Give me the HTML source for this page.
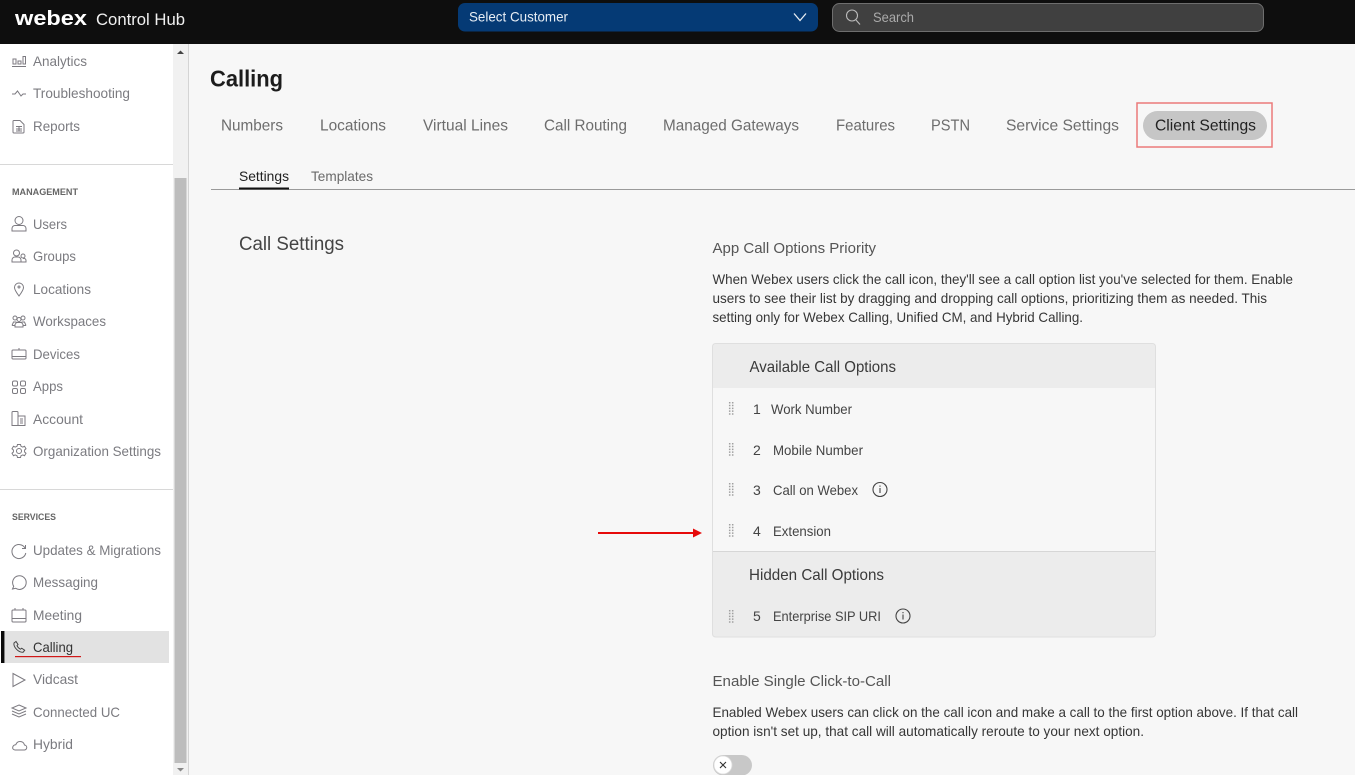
<!DOCTYPE html>
<html><head><meta charset="utf-8"><title>Webex Control Hub</title>
<style>
html,body{margin:0;padding:0;background:#f7f7f7;overflow:hidden}
svg{display:block}
text{font-family:"Liberation Sans",sans-serif;white-space:pre}
.n{font-size:14px;fill:#7b7b80}
.s{font-size:9.500px;font-weight:bold;fill:#666}
.t{font-size:16px;fill:#6d6d6d}
.b{font-size:14px;fill:#363636}
.h{font-size:16px;fill:#3a3a3a}
.r{font-size:14px;fill:#444}
.i{fill:none;stroke:#7c7a80;stroke-width:1}
</style></head><body>
<svg width="1356" height="777" viewBox="0 0 1356 777" xmlns="http://www.w3.org/2000/svg">
<rect width="1356" height="777" fill="#f7f7f7"/>
<!-- sidebar -->
<rect x="0" y="44" width="173" height="733" fill="#fff"/>
<rect x="173" y="44" width="15" height="733" fill="#f1f1f1"/>
<rect x="188" y="44" width="1" height="733" fill="#d4d4d4"/>
<rect x="174.500" y="178" width="12" height="585" fill="#bdbdbd"/>
<path d="M177 54l3.500-3.500 3.500 3.500z" fill="#444"/>
<path d="M177 768l3.500 3.500 3.500-3.500z" fill="#888"/>
<rect x="0" y="164" width="173" height="1" fill="#d8d8d8"/>
<rect x="0" y="489" width="173" height="1" fill="#d8d8d8"/>
<rect x="5" y="631" width="164" height="32" fill="#e2e2e2"/>
<rect x="1" y="631" width="3.500" height="32" fill="#0a0a0a"/>

<g lengthAdjust="spacingAndGlyphs">
<text class="n" lengthAdjust="spacingAndGlyphs" x="33" y="66" textLength="54">Analytics</text>
<text class="n" lengthAdjust="spacingAndGlyphs" x="33" y="98" textLength="97">Troubleshooting</text>
<text class="n" lengthAdjust="spacingAndGlyphs" x="33" y="131" textLength="47">Reports</text>
<text class="s" lengthAdjust="spacingAndGlyphs" x="12" y="195" textLength="66">MANAGEMENT</text>
<text class="n" lengthAdjust="spacingAndGlyphs" x="33" y="229" textLength="34">Users</text>
<text class="n" lengthAdjust="spacingAndGlyphs" x="33" y="261" textLength="43">Groups</text>
<text class="n" lengthAdjust="spacingAndGlyphs" x="33" y="294" textLength="58">Locations</text>
<text class="n" lengthAdjust="spacingAndGlyphs" x="33" y="326" textLength="73">Workspaces</text>
<text class="n" lengthAdjust="spacingAndGlyphs" x="33" y="359" textLength="47">Devices</text>
<text class="n" lengthAdjust="spacingAndGlyphs" x="33" y="391" textLength="30">Apps</text>
<text class="n" lengthAdjust="spacingAndGlyphs" x="33" y="424" textLength="50">Account</text>
<text class="n" lengthAdjust="spacingAndGlyphs" x="33" y="456" textLength="128">Organization Settings</text>
<text class="s" lengthAdjust="spacingAndGlyphs" x="12" y="520" textLength="44">SERVICES</text>
<text class="n" lengthAdjust="spacingAndGlyphs" x="33" y="555" textLength="128">Updates &amp; Migrations</text>
<text class="n" lengthAdjust="spacingAndGlyphs" x="33" y="587" textLength="65">Messaging</text>
<text class="n" lengthAdjust="spacingAndGlyphs" x="33" y="620" textLength="49">Meeting</text>
<text class="n" lengthAdjust="spacingAndGlyphs" x="33" y="652" textLength="40" style="fill:#333">Calling</text>
<text class="n" lengthAdjust="spacingAndGlyphs" x="33" y="684" textLength="45">Vidcast</text>
<text class="n" lengthAdjust="spacingAndGlyphs" x="33" y="717" textLength="87">Connected UC</text>
<text class="n" lengthAdjust="spacingAndGlyphs" x="33" y="749" textLength="40">Hybrid</text>
</g>
<rect x="15" y="656" width="66" height="1.200" fill="#d01818"/>

<!-- sidebar icons -->
<g class="i">
<path d="M12 66.500h14M13 59h3v5h-3zM18 61h3v3h-3zM23 56.500h2.500v7.500H23z"/>
<path d="M12 94h3l2.500-3 3.500 5 2-2h3"/>
<path d="M14 120.500h6l4 4v7.500a1 1 0 0 1-1 1h-9a1 1 0 0 1-1-1v-11a1 1 0 0 1 1-.500zM16 126.500h6M16 129h6M16 131h6M19 126.500v5"/>
<circle cx="19" cy="220.500" r="4"/><path d="M12 231v-2.500a3 3 0 0 1 3-3h8a3 3 0 0 1 3 3V231z"/>
<circle cx="16.500" cy="253" r="3"/><path d="M12 262v-2a3 3 0 0 1 3-3h3a3 3 0 0 1 3 3v2zM23 254a2 2 0 1 1 0 4 2 2 0 0 1 0-4zM21 262h5v-1.500a2 2 0 0 0-3-1.800"/>
<path d="M19 296c-3-4-4.500-6.500-4.500-8.500a4.500 4.500 0 0 1 9 0c0 2-1.500 4.500-4.500 8.500z"/><circle cx="19" cy="287" r="1"/>
<circle cx="15" cy="318" r="2"/><circle cx="19" cy="319.500" r="2"/><circle cx="23" cy="318" r="2"/><path d="M12 325.500l1.500-3.500h3M26 325.500l-1.500-3.500h-3M15 327v-2.500l1.500-2h5l1.500 2V327zM12 325.500h3M23 325.500h3"/>
<rect x="12" y="350" width="14" height="9" rx="1"/><path d="M12 356.500h14M19 350v-2"/>
<rect x="12.500" y="381" width="5" height="5" rx="1.500"/><rect x="20.500" y="381" width="5" height="5" rx="1.500"/><rect x="12.500" y="388.500" width="5" height="5" rx="1.500"/><rect x="20.500" y="388.500" width="5" height="5" rx="1.500"/>
<path d="M12 425.500v-13a1 1 0 0 1 1-1h4a1 1 0 0 1 1 1v13zM18 416h7v9.500h-7M20 419h3M20 421h3M20 423h3"/>
<circle cx="19" cy="451" r="2.500"/><path d="M17.500 444.500h3l.5 1.800 1.800.8 1.700-.8 1.500 2.500-1.400 1.200v2l1.400 1.200-1.500 2.500-1.700-.8-1.800.8-.5 1.800h-3l-.5-1.800-1.800-.8-1.700.8-1.500-2.500 1.400-1.200v-2l-1.400-1.200 1.500-2.500 1.700.8 1.800-.8z"/>
<path d="M25.500 545v3.500H22M25 548a7 7 0 1 0 .8 5"/>
<path d="M12.500 589l1.200-2.700a6.800 6.800 0 1 1 2 2l-3.200.7z"/>
<rect x="12" y="610" width="14" height="12" rx="1"/><path d="M12 618.500h14M15 610v-2M23 610v-2"/>
<path d="M14 643l2-1.500 2 3-1 1.200a7 7 0 0 0 3.500 3.500l1.200-1 3 2-1.500 2c-5 .5-10-5.500-9.200-9.200z" stroke="#444"/>
<path d="M13 673.500l12 6.500-12 6.500z"/>
<path d="M19 705l7 3-7 3-7-3zM12 711l7 3 7-3M12 714l7 3 7-3"/>
<path d="M15 750h9a2.500 2.500 0 0 0 .5-5c-.5-2-2-3.500-4.500-3.500-2.200 0-3.500 1.200-4.200 3.200-3.500.2-4.500 4.800-.8 5.300z"/>
</g>

<!-- header -->
<rect width="1356" height="44" fill="#0e0e0e"/>
<text lengthAdjust="spacingAndGlyphs" x="15" y="25" textLength="72" style="font-size:20px;font-weight:bold;fill:#fff">webex</text>
<text lengthAdjust="spacingAndGlyphs" x="96" y="25" textLength="89" style="font-size:17px;fill:#f0f0f0">Control Hub</text>
<rect x="458" y="3" width="360" height="28.500" rx="7" fill="#053a75"/>
<text lengthAdjust="spacingAndGlyphs" x="469" y="21.500" textLength="99" style="font-size:14px;fill:#e8eef5">Select Customer</text>
<path d="M794 13.500l6 7 6-7" fill="none" stroke="#e6ecf3" stroke-width="1.300"/>
<rect x="832.500" y="3.500" width="431" height="28" rx="7" fill="#404040" stroke="#6e6e6e"/>
<circle cx="852" cy="15.500" r="5.500" fill="none" stroke="#bbb" stroke-width="1.100"/>
<path d="M856 20l4 4.500" stroke="#bbb" stroke-width="1.100"/>
<text lengthAdjust="spacingAndGlyphs" x="873" y="22" textLength="41" style="font-size:14px;fill:#aaa">Search</text>

<!-- title & tabs -->
<text lengthAdjust="spacingAndGlyphs" x="210" y="86.500" textLength="73" style="font-size:23px;font-weight:bold;fill:#1c1c1c">Calling</text>
<text class="t" lengthAdjust="spacingAndGlyphs" x="221" y="130.500" textLength="62">Numbers</text>
<text class="t" lengthAdjust="spacingAndGlyphs" x="320" y="130.500" textLength="66">Locations</text>
<text class="t" lengthAdjust="spacingAndGlyphs" x="423" y="130.500" textLength="85">Virtual Lines</text>
<text class="t" lengthAdjust="spacingAndGlyphs" x="544" y="130.500" textLength="83">Call Routing</text>
<text class="t" lengthAdjust="spacingAndGlyphs" x="663" y="130.500" textLength="136">Managed Gateways</text>
<text class="t" lengthAdjust="spacingAndGlyphs" x="836" y="130.500" textLength="59">Features</text>
<text class="t" lengthAdjust="spacingAndGlyphs" x="931" y="130.500" textLength="39">PSTN</text>
<text class="t" lengthAdjust="spacingAndGlyphs" x="1006" y="130.500" textLength="113">Service Settings</text>
<rect x="1143" y="111" width="124" height="29" rx="14.500" fill="#c6c6c6"/>
<text lengthAdjust="spacingAndGlyphs" x="1155" y="130.500" textLength="101" style="font-size:16px;fill:#222">Client Settings</text>
<rect x="1137" y="103" width="135" height="44" fill="none" stroke="#ec7a7a" stroke-width="1.500"/>

<text lengthAdjust="spacingAndGlyphs" x="239" y="181" textLength="50" style="font-size:14px;fill:#222">Settings</text>
<text lengthAdjust="spacingAndGlyphs" x="311" y="181" textLength="62" style="font-size:14px;fill:#6a6a6a">Templates</text>
<rect x="211" y="189" width="1145" height="1" fill="#9a9a9a"/>
<rect x="239" y="187.500" width="50" height="2" fill="#111"/>

<!-- content -->
<text lengthAdjust="spacingAndGlyphs" x="239" y="250" textLength="105" style="font-size:19px;fill:#444">Call Settings</text>
<text lengthAdjust="spacingAndGlyphs" x="712.500" y="253" textLength="163.500" style="font-size:15px;fill:#555">App Call Options Priority</text>
<text class="b" lengthAdjust="spacingAndGlyphs" x="712.500" y="284" textLength="580.500">When Webex users click the call icon, they'll see a call option list you've selected for them. Enable</text>
<text class="b" lengthAdjust="spacingAndGlyphs" x="712.500" y="303" textLength="554.500">users to see their list by dragging and dropping call options, prioritizing them as needed. This</text>
<text class="b" lengthAdjust="spacingAndGlyphs" x="712.500" y="322" textLength="370.500">setting only for Webex Calling, Unified CM, and Hybrid Calling.</text>

<!-- panel -->
<rect x="712.500" y="343.500" width="443" height="293.500" rx="3" fill="#ececec" stroke="#dfdfdf"/>
<rect x="713" y="388" width="442" height="163" fill="#f7f7f7"/>
<rect x="713" y="551" width="442" height="1" fill="#d6d6d6"/>
<text class="h" lengthAdjust="spacingAndGlyphs" x="749.500" y="372" textLength="146.500">Available Call Options</text>
<text class="h" lengthAdjust="spacingAndGlyphs" x="749" y="580" textLength="135">Hidden Call Options</text>

<g fill="none" stroke="#a0a0a0" stroke-width="1.500" stroke-dasharray="1.500 1.300">
<path d="M729.700 402v13M732.700 402v13"/>
<path d="M729.700 443v13M732.700 443v13"/>
<path d="M729.700 483v13M732.700 483v13"/>
<path d="M729.700 524v13M732.700 524v13"/>
<path d="M729.700 610v13M732.700 610v13"/>
</g>

<text class="r" x="753" y="414">1</text><text class="r" lengthAdjust="spacingAndGlyphs" x="771" y="414" textLength="81">Work Number</text>
<text class="r" x="753" y="455">2</text><text class="r" lengthAdjust="spacingAndGlyphs" x="773" y="455" textLength="90">Mobile Number</text>
<text class="r" x="753" y="495">3</text><text class="r" lengthAdjust="spacingAndGlyphs" x="773" y="495" textLength="85">Call on Webex</text>
<text class="r" x="753" y="536">4</text><text class="r" lengthAdjust="spacingAndGlyphs" x="773" y="536" textLength="58">Extension</text>
<text class="r" x="753" y="621">5</text><text class="r" lengthAdjust="spacingAndGlyphs" x="773" y="621" textLength="108">Enterprise SIP URI</text>

<g fill="none" stroke="#444" stroke-width="1.100">
<circle cx="880" cy="489.500" r="7"/><path d="M880 488v5M880 485.500v1.300"/>
<circle cx="903" cy="616" r="7"/><path d="M903 614.500v5M903 612v1.300"/>
</g>

<!-- arrow -->
<rect x="598" y="532" width="97" height="2" fill="#e60a0a"/>
<path d="M693 528.500l9 4.500-9 4.500z" fill="#e60a0a"/>

<text lengthAdjust="spacingAndGlyphs" x="712.500" y="686" textLength="178.500" style="font-size:15px;fill:#555">Enable Single Click-to-Call</text>
<text class="b" lengthAdjust="spacingAndGlyphs" x="712.500" y="717" textLength="585.500">Enabled Webex users can click on the call icon and make a call to the first option above. If that call</text>
<text class="b" lengthAdjust="spacingAndGlyphs" x="712.500" y="736" textLength="431.500">option isn't set up, that call will automatically reroute to your next option.</text>

<!-- toggle -->
<rect x="713" y="755" width="39" height="20.500" rx="10.250" fill="#c8c8c8"/>
<circle cx="723" cy="765" r="9" fill="#fff" stroke="#dcdcdc" stroke-width=".8"/>
<path d="M720 762l6 6M726 762l-6 6" stroke="#333" stroke-width="1.100"/>

<!-- image edges -->
<rect x="1355" y="0" width="1" height="777" fill="#fff"/>
<rect x="0" y="775" width="1356" height="2" fill="#fff"/>
</svg>
</body></html>
